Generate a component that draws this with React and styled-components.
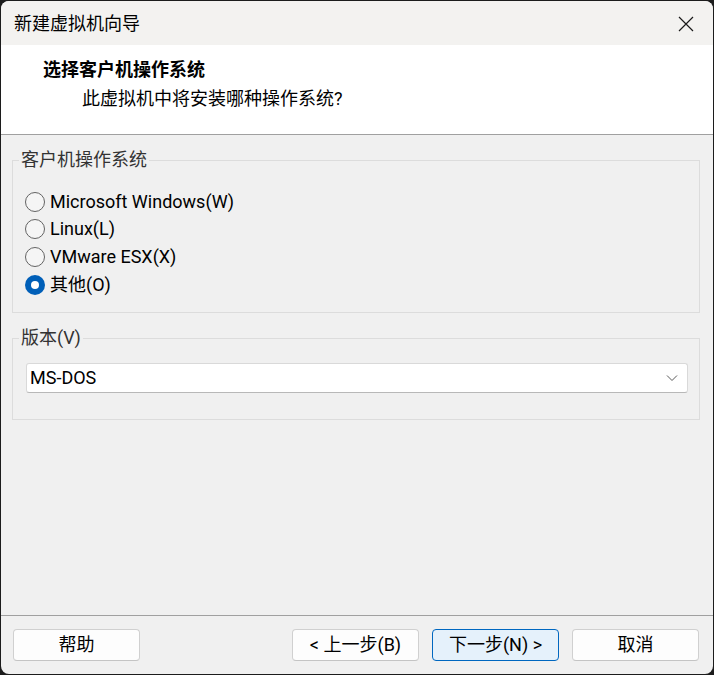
import React from "react";
import styled, { createGlobalStyle } from "styled-components";

const Global = createGlobalStyle`
  html, body { margin: 0; padding: 0; background: #1c1c1c; }
  body { width: 714px; height: 675px; overflow: hidden; }
  * { box-sizing: border-box; }
`;

const FONT = `Roboto, "Noto Sans CJK SC", sans-serif`;

const Window = styled.div`
  margin: 1px;
  width: 712px;
  height: 673px;
  border-radius: 8px;
  overflow: hidden;
  background: #f0f0f0;
  display: flex;
  flex-direction: column;
  font-family: ${FONT};
  font-size: 18px;
  color: #000;
`;

const TitleBar = styled.div`
  height: 44px;
  flex: none;
  background: #f3f2f0;
  display: flex;
  align-items: center;
  justify-content: space-between;
  padding: 2px 19px 0 13px;
`;

const TitleText = styled.div`
  line-height: 24px;
`;

const CloseBtn = styled.div`
  width: 16px;
  height: 16px;
  display: flex;
  align-items: center;
  justify-content: center;
`;

const Header = styled.div`
  height: 90px;
  flex: none;
  background: #fff;
  border-bottom: 1px solid #a0a0a0;
  display: flex;
  flex-direction: column;
  padding-top: 13px;
`;

const HeaderTitle = styled.div`
  font-weight: 700;
  line-height: 24px;
  padding-left: 42px;
`;

const HeaderSub = styled.div`
  line-height: 24px;
  padding-left: 81px;
  margin-top: 5px;
`;

const Body = styled.div`
  flex: 1;
  padding: 13px 13px 0 11px;
  display: flex;
  flex-direction: column;
  gap: 13px;
`;

const Group = styled.fieldset`
  margin: 0;
  border: 1px solid #dcdcdc;
  padding: ${p => p.$pad};
  min-width: 0;
`;

const Legend = styled.legend`
  padding: 0 2px;
  margin-left: ${p => p.$offset}px;
  line-height: 24px;
  color: #333;
`;

const RadioList = styled.div`
  display: flex;
  flex-direction: column;
`;

const RadioRow = styled.label`
  height: 27.6px;
  display: flex;
  align-items: center;
  gap: 5px;
  line-height: 24px;
`;

const RadioCircle = styled.span`
  width: 20px;
  height: 20px;
  border-radius: 50%;
  flex: none;
  border: ${p => (p.$checked ? "none" : "1px solid #636363")};
  background: ${p => (p.$checked ? "#005fb8" : "#f5f5f5")};
  display: flex;
  align-items: center;
  justify-content: center;
  &::after {
    content: "";
    display: ${p => (p.$checked ? "block" : "none")};
    width: 8px;
    height: 8px;
    border-radius: 50%;
    background: #fff;
  }
`;

const Select = styled.div`
  height: 30px;
  background: #fff;
  border: 1px solid #d9d9d9;
  border-bottom-color: #b8b8b8;
  border-radius: 3px;
  display: flex;
  align-items: center;
  justify-content: space-between;
  padding: 0 9px 0 3px;
  line-height: 24px;
`;

const Footer = styled.div`
  flex: none;
  border-top: 1px solid #a0a0a0;
  padding: 13px 14px 13px 12px;
  display: flex;
  align-items: center;
`;

const ButtonGroup = styled.div`
  margin-left: auto;
  display: flex;
  gap: 13px;
`;

const Button = styled.div`
  width: 127px;
  height: 32px;
  border-radius: 4px;
  border: 1px solid ${p => (p.$primary ? "#0067c0" : "#d0d0d0")};
  border-bottom-color: ${p => (p.$primary ? "#0067c0" : "#c4c4c4")};
  background: ${p => (p.$primary ? "#e5f1fb" : "#fdfdfd")};
  display: flex;
  align-items: center;
  justify-content: center;
  line-height: 24px;
`;

const options = [
  { label: "Microsoft Windows(W)", checked: false },
  { label: "Linux(L)", checked: false },
  { label: "VMware ESX(X)", checked: false },
  { label: "其他(O)", checked: true },
];

export default function App() {
  return (
    <>
      <Global />
      <Window>
        <TitleBar>
          <TitleText>新建虚拟机向导</TitleText>
          <CloseBtn>
            <svg width="16" height="16" viewBox="0 0 16 16">
              <path d="M1 1L15 15M15 1L1 15" stroke="#1a1a1a" strokeWidth="1.2" fill="none" />
            </svg>
          </CloseBtn>
        </TitleBar>
        <Header>
          <HeaderTitle>选择客户机操作系统</HeaderTitle>
          <HeaderSub>此虚拟机中将安装哪种操作系统?</HeaderSub>
        </Header>
        <Body>
          <Group $pad="16px 12px 14px 12px">
            <Legend $offset={-6}>客户机操作系统</Legend>
            <RadioList>
              {options.map(o => (
                <RadioRow key={o.label}>
                  <RadioCircle $checked={o.checked} />
                  {o.label}
                </RadioRow>
              ))}
            </RadioList>
          </Group>
          <Group $pad="13px 11px 26px 13px">
            <Legend $offset={-7}>版本(V)</Legend>
            <Select>
              <span>MS-DOS</span>
              <svg width="12" height="8" viewBox="0 0 12 8">
                <path d="M1 1.5L6 6.5L11 1.5" stroke="#5a5a5a" strokeWidth="1" fill="none" />
              </svg>
            </Select>
          </Group>
        </Body>
        <Footer>
          <Button>帮助</Button>
          <ButtonGroup>
            <Button>&lt; 上一步(B)</Button>
            <Button $primary>下一步(N) &gt;</Button>
            <Button>取消</Button>
          </ButtonGroup>
        </Footer>
      </Window>
    </>
  );
}
